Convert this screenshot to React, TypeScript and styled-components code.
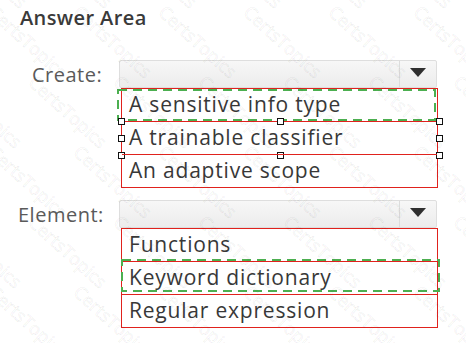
import React, { FC } from "react"
import styled, { createGlobalStyle } from "styled-components"

const GlobalStyle = createGlobalStyle`
  html, body {
    margin: 0;
    padding: 0;
    background: #ffffff;
  }
  body {
    font-family: "Open Sans", "Noto Sans", sans-serif;
  }
`

const Page = styled.div`
  position: relative;
  width: 466px;
  height: 343px;
  overflow: hidden;
  background: #ffffff;
`

const Title = styled.h2`
  margin: 0;
  padding: 5px 0 0 20px;
  font-size: 20px;
  line-height: 26px;
  font-weight: 600;
  color: #3a3a3a;
  letter-spacing: 0.4px;
`

const Question = styled.div<{ $top: number }>`
  display: grid;
  grid-template-columns: 119px 320px;
  margin-top: ${(p) => p.$top}px;
`

const Label = styled.div<{ $indent: number }>`
  padding: 1px 0 0 ${(p) => p.$indent}px;
  font-size: 20px;
  line-height: 28px;
  letter-spacing: 0.5px;
  color: #5a5a5a;
`

const Control = styled.div`
  display: flex;
  flex-direction: column;
`

const Dropdown = styled.div`
  display: flex;
  height: 28px;
  width: 318px;
  box-sizing: border-box;
  border: 1px solid #dedede;
  border-radius: 2px;
  background: linear-gradient(to bottom, #f7f7f7, #ececec);
`

const DropdownValue = styled.div`
  flex: 1;
`

const ArrowBox = styled.div`
  width: 36px;
  border-left: 1px solid #dcdcdc;
  display: flex;
  align-items: center;
  justify-content: center;
`

const Arrow = styled.div`
  width: 0;
  height: 0;
  border-left: 8px solid transparent;
  border-right: 8px solid transparent;
  border-top: 9px solid #2f2f2f;
  margin-top: -4px;
`

const List = styled.div`
  margin-left: 2px;
  width: 317px;
  box-sizing: border-box;
  border: 1px solid #e0221d;
`

const Row = styled.div`
  position: relative;
  height: 32px;
  padding-left: 7px;
  font-size: 21px;
  line-height: 30px;
  color: #383838;
  letter-spacing: 0.8px;
  & + & {
    border-top: 1px solid #e0221d;
  }
`

const Dashed = styled.svg<{ $dx: number; $dy: number }>`
  position: absolute;
  left: ${(p) => p.$dx}px;
  top: ${(p) => p.$dy}px;
  width: 320px;
  height: 32px;
  overflow: visible;
  pointer-events: none;
`

const SelectionFrame = styled.div`
  position: absolute;
  inset: -1px -2px -1px -1px;
  pointer-events: none;
`

const Handle = styled.span<{ $x: string; $y: string }>`
  position: absolute;
  left: ${(p) => p.$x};
  top: ${(p) => p.$y};
  width: 5px;
  height: 5px;
  margin: -3px 0 0 -3px;
  background: #ffffff;
  border: 1px solid #111111;
`

const Mark = styled.span`
  position: absolute;
  font-family: "Open Sans", sans-serif;
  font-size: 18px;
  color: transparent;
  -webkit-text-stroke: 0.6px rgba(0, 0, 0, 0.09);
  transform: rotate(42deg);
  transform-origin: left top;
  white-space: nowrap;
  pointer-events: none;
`

interface DashProps {
  dx: number
  dy: number
  w: number
  h: number
}

const DashedBox: FC<DashProps> = ({ dx, dy, w, h }) => (
  <Dashed $dx={dx} $dy={dy}>
    <rect
      x="1"
      y="1"
      width={w - 2}
      height={h - 2}
      fill="none"
      stroke="#4caf50"
      strokeWidth="2"
      strokeDasharray="9 6"
    />
  </Dashed>
)

const handles: [string, string][] = [
  ["0%", "0%"],
  ["50%", "0%"],
  ["100%", "0%"],
  ["0%", "50%"],
  ["100%", "50%"],
  ["0%", "100%"],
  ["50%", "100%"],
  ["100%", "100%"],
]

interface Option {
  text: string
  dash?: DashProps
  selected?: boolean
}

interface QuestionProps {
  label: string
  indent: number
  top: number
  options: Option[]
}

const QuestionRow: FC<QuestionProps> = ({ label, indent, top, options }) => (
  <Question $top={top}>
    <Label $indent={indent}>{label}</Label>
    <Control>
      <Dropdown>
        <DropdownValue />
        <ArrowBox>
          <Arrow />
        </ArrowBox>
      </Dropdown>
      <List>
        {options.map((o) => (
          <Row key={o.text}>
            {o.text}
            {o.dash && <DashedBox {...o.dash} />}
            {o.selected && (
              <SelectionFrame>
                {handles.map(([x, y]) => (
                  <Handle key={x + y} $x={x} $y={y} />
                ))}
              </SelectionFrame>
            )}
          </Row>
        ))}
      </List>
    </Control>
  </Question>
)

const marks: [number, number][] = []
for (let r = -2; r < 6; r++) {
  for (let c = -1; c < 7; c++) {
    marks.push([c * 85 + (r % 2) * 40, r * 70])
  }
}

const App: FC = () => {
  return (
    <Page>
      <GlobalStyle />
      <Title>Answer Area</Title>
      <QuestionRow
        label="Create:"
        indent={32}
        top={29}
        options={[
          {
            text: "A sensitive info type",
            dash: { dx: -5, dy: 0, w: 319, h: 32 },
          },
          { text: "A trainable classifier", selected: true },
          { text: "An adaptive scope" },
        ]}
      />
      <QuestionRow
        label="Element:"
        indent={18}
        top={12}
        options={[
          { text: "Functions" },
          {
            text: "Keyword dictionary",
            dash: { dx: -1, dy: -3, w: 319, h: 33 },
          },
          { text: "Regular expression" },
        ]}
      />
      {marks.map(([x, y]) => (
        <Mark key={`${x}-${y}`} style={{ left: x, top: y }}>
          CertsTopics
        </Mark>
      ))}
    </Page>
  )
}

export default App
